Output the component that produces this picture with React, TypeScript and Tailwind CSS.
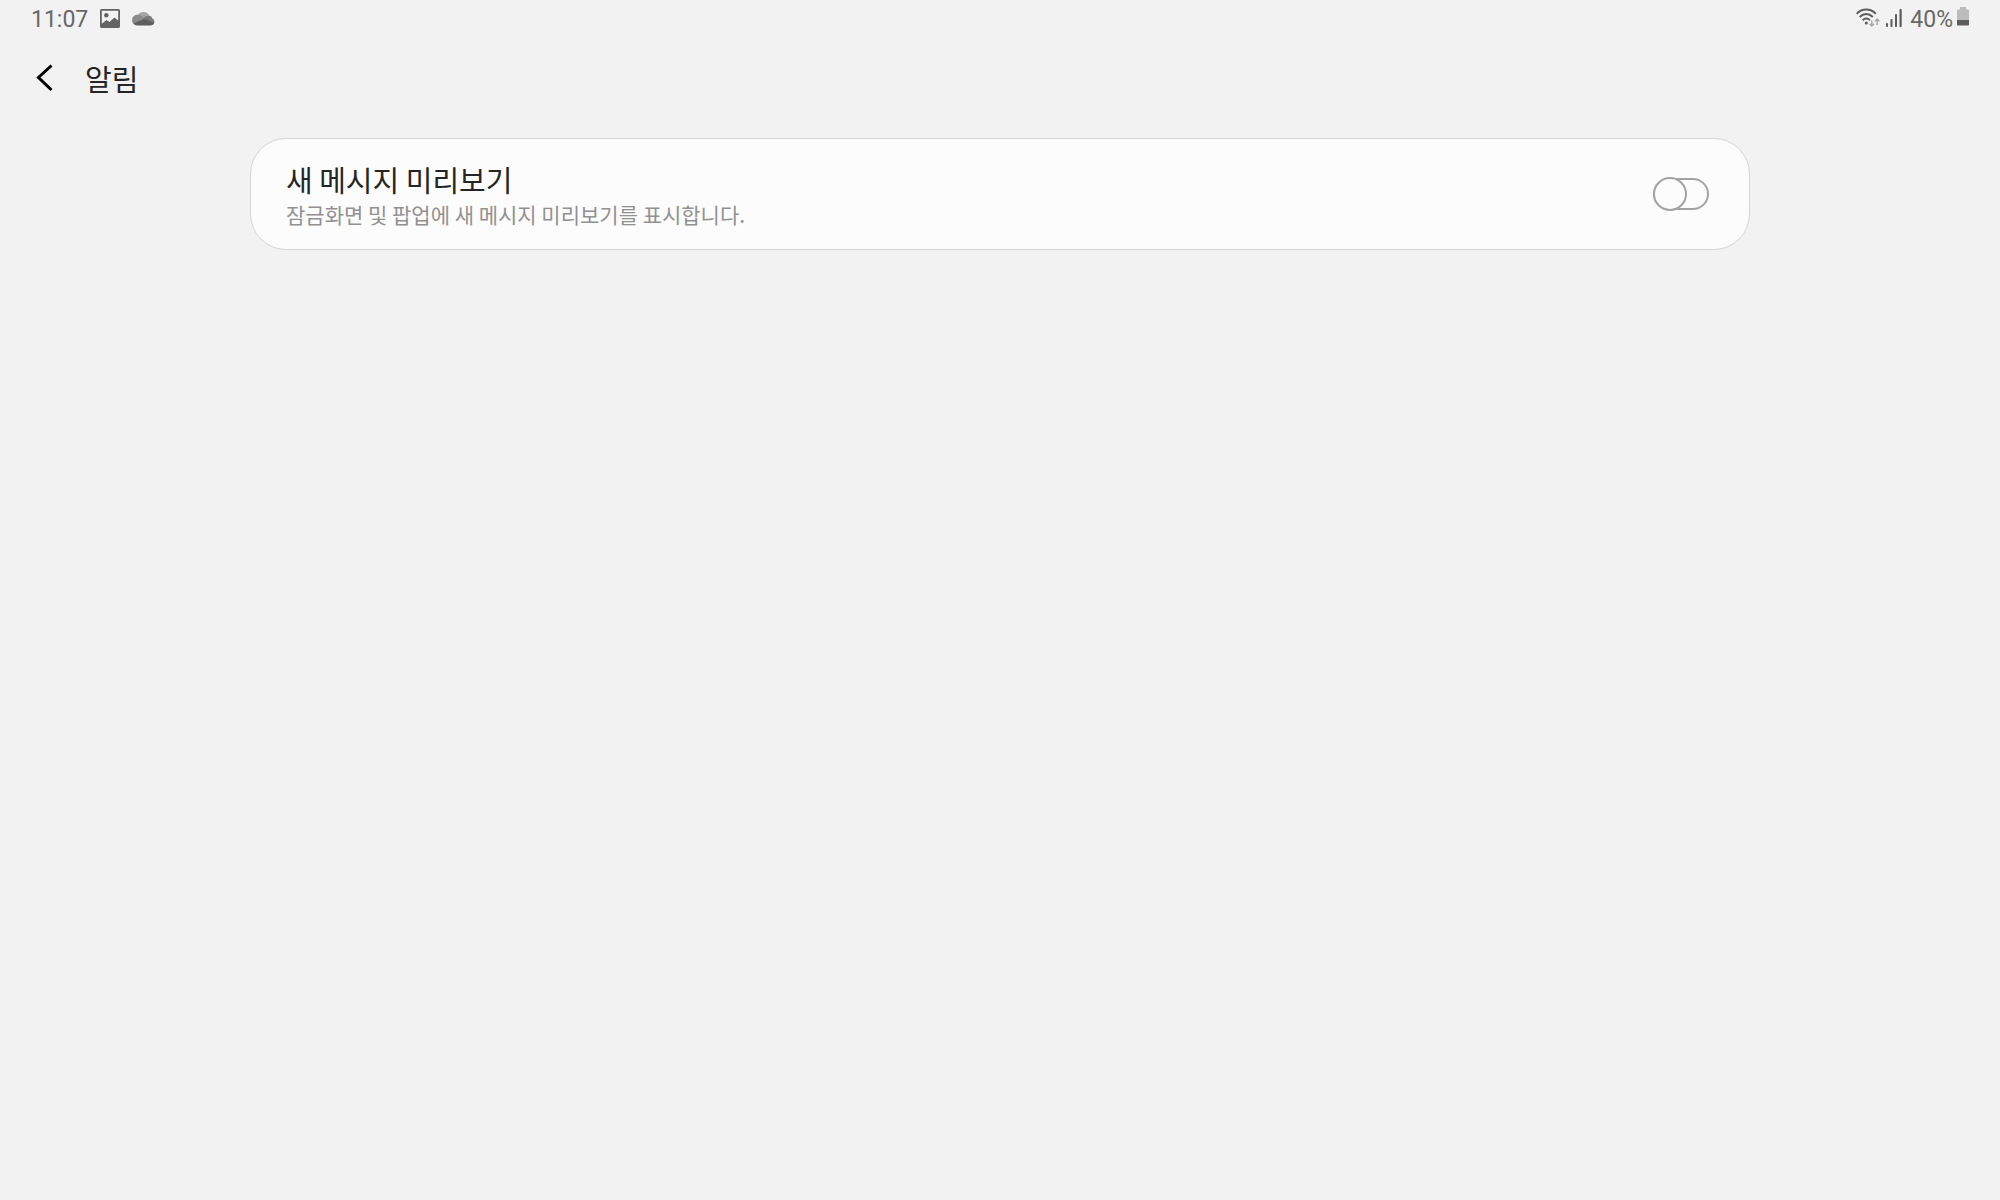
import { useState } from 'react';

function PictureIcon() {
  return (
    <svg width="20" height="19" viewBox="0 0 20 19" fill="#636363" aria-hidden="true">
      <path
        fillRule="evenodd"
        d="M1.5 0h17A1.5 1.5 0 0 1 20 1.5v16a1.5 1.5 0 0 1-1.5 1.5h-17A1.5 1.5 0 0 1 0 17.5v-16A1.5 1.5 0 0 1 1.5 0ZM1.8 1.8v12.9l4.7-3.7 2.8 2 5.2-4.500 3.700 3V1.8Z"
      />
      <circle cx="6.3" cy="6.300" r="2.2" />
    </svg>
  );
}

function CloudIcon() {
  return (
    <svg width="23" height="15" viewBox="0 0 23 15" aria-hidden="true">
      <path d="M5 6a6.6 6.6 0 0 1 12.5-1L12 9Z" fill="#a6a6a6" />
      <path d="M5.500 3.800c3 0 4 1.200 6.500 3L3 13.500A4.800 4.800 0 0 1 0 9 5.200 5.200 0 0 1 5.500 3.800Z" fill="#8a8a8a" />
      <path d="M11.500 7.200c2-2.400 4-2.900 6.500-2.200 1.200.4 1.900 1.200 2.100 2.200A4 4 0 0 1 22.500 10.500l-1 3Z" fill="#7b7b7b" />
      <path d="M1.600 12.500 12 7.500l10.200 4.500a3.800 3.800 0 0 1-3.400 2.500H5A4.800 4.800 0 0 1 1.600 12.500Z" fill="#5f5f5f" />
    </svg>
  );
}

function WifiIcon() {
  return (
    <svg width="24" height="20" viewBox="0 0 24 20" fill="none" aria-hidden="true">
      <g stroke="#5c5c5c" strokeWidth="2">
        <path d="M.7 5.700c5.500-5.600 13.600-5.600 19.100 0" />
        <path d="M3.700 9c3.800-3.900 9.300-3.900 13.100 0" />
        <path d="M6.700 12.200c2.200-2.200 5-2.200 7.200 0" />
      </g>
      <circle cx="10.300" cy="15" r="1.500" fill="#5c5c5c" />
      <g stroke="#a8a8a8" strokeWidth="1.500">
        <path d="M15.800 12.500v5.500M13.600 15.800l2.200 2.200 2.200-2.200" />
        <path d="M21.200 17v-5.500M19 13.200l2.200-2.200 2.200 2.200" />
      </g>
    </svg>
  );
}

function SignalIcon() {
  return (
    <svg width="16" height="18" viewBox="0 0 16 18" fill="#5c5c5c" aria-hidden="true">
      <rect x="0" y="14" width="2" height="4" rx=".8" />
      <rect x="4.500" y="10" width="2" height="8" rx=".8" />
      <rect x="9" y="5" width="2" height="13" rx=".8" />
      <rect x="13.500" y="0" width="2.200" height="18" rx=".8" />
    </svg>
  );
}

function BatteryIcon() {
  return (
    <svg width="12" height="19" viewBox="0 0 12 19" aria-hidden="true">
      <path d="M3 0h6v2.500h2a1 1 0 0 1 1 1V13H0V3.500a1 1 0 0 1 1-1h2Z" fill="#bcbcbc" />
      <path d="M0 13h12v4.500a1 1 0 0 1-1 1H1a1 1 0 0 1-1-1Z" fill="#5c5c5c" />
    </svg>
  );
}

function StatusBar() {
  return (
    <div className="flex h-9 items-center justify-between px-[31px] pt-1 font-[Roboto,sans-serif] text-[23px] leading-8 text-[#676767]">
      <div className="flex items-center">
        <span>11:07</span>
        <span className="ml-3 flex items-center gap-3 pb-1">
          <PictureIcon />
          <CloudIcon />
        </span>
      </div>
      <div className="flex items-center">
        <span className="flex items-center gap-1.5 pb-1">
          <WifiIcon />
          <SignalIcon />
        </span>
        <span className="ml-2">40%</span>
        <span className="ml-1 pb-2">
          <BatteryIcon />
        </span>
      </div>
    </div>
  );
}

export default function App() {
  const [preview, setPreview] = useState(false);

  return (
    <div className="min-h-screen bg-[#f2f2f2] font-['Noto_Sans_CJK_KR',sans-serif] text-[#252525]">
      <StatusBar />

      <header className="flex h-[84px] items-center pl-9">
        <button type="button" aria-label="뒤로" className="cursor-pointer">
          <svg width="17" height="28" viewBox="0 0 17 28" fill="none" stroke="#000" strokeWidth="3" aria-hidden="true">
            <path d="M15.500 1.500 2.500 13.500l13 12.500" />
          </svg>
        </button>
        <h1 className="ml-8 text-[29px] leading-10">알림</h1>
      </header>

      <main className="mx-auto mt-[18px] w-3/4">
        <label
          htmlFor="preview"
          className="flex cursor-pointer items-center justify-between rounded-[36px] border border-[#d5d5d5] bg-[#fcfcfc] py-5 pl-[35px] pr-10"
        >
          <span className="flex flex-col">
            <span className="text-[29px] leading-10">새 메시지 미리보기</span>
            <span className="text-[21px] leading-[30px] text-[#919191]">
              잠금화면 및 팝업에 새 메시지 미리보기를 표시합니다.
            </span>
          </span>
          <input
            id="preview"
            type="checkbox"
            role="switch"
            checked={preview}
            onChange={(e) => setPreview(e.target.checked)}
            className="flex h-8 w-14 shrink-0 cursor-pointer appearance-none items-center rounded-full border-2 border-[#a3a3a3] before:-ml-0.5 before:size-[34px] before:shrink-0 before:rounded-full before:border-2 before:border-[#a3a3a3] before:bg-[#fcfcfc] before:content-[''] checked:justify-end checked:before:-mr-0.5"
          />
        </label>
      </main>
    </div>
  );
}
